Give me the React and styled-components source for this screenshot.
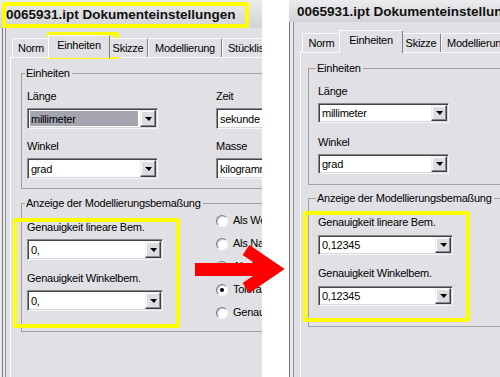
import React from "react";
import styled, { createGlobalStyle } from "styled-components";

const GlobalStyle = createGlobalStyle`
  html, body { margin: 0; padding: 0; background: #ffffff; }
  body { font-family: "Liberation Sans", Arial, sans-serif; }
  * { box-sizing: border-box; }
`;

const Page = styled.div`
  position: relative;
  width: 500px;
  height: 377px;
  overflow: hidden;
  display: flex;
  gap: 27px;
  background: #ffffff;
`;

const Dialog = styled.section`
  width: ${(p) => p.$w}px;
  flex: none;
  display: flex;
  flex-direction: column;
  overflow: hidden;
  background: #e1e1e5;
`;

const TitleBar = styled.header`
  height: ${(p) => p.$h}px;
  flex: none;
  display: flex;
  align-items: center;
  padding-left: ${(p) => p.$pl}px;
  background: linear-gradient(to bottom, #ececef, #d3d3d7);
  font-weight: 700;
  font-size: ${(p) => p.$fs}px;
  color: #111;
  white-space: nowrap;
`;

const frames = {
  left: "inset 2px 0 0 #e9e9ec, inset 3px 0 0 #7a7a7e, inset 5px 0 0 #e9e9ec, inset 6px 0 0 #8e8e92",
  right: "inset 1px 0 0 #7a7a7e, inset 4px 0 0 #e9e9ec, inset 5px 0 0 #8e8e92",
};

const Body = styled.div`
  flex: 1;
  min-height: 0;
  padding: ${(p) => p.$pt}px 0 0 ${(p) => p.$pl}px;
  box-shadow: ${(p) => frames[p.$frame]};
`;

const TabStrip = styled.div`
  position: relative;
  z-index: 2;
  display: flex;
  align-items: flex-end;
  height: 22px;
  padding-left: 2px;
  width: max-content;
`;

const Tab = styled.div`
  position: relative;
  z-index: ${(p) => (p.$active ? 2 : 1)};
  flex: none;
  width: ${(p) => p.$w}px;
  height: ${(p) => (p.$active ? 23 : 19)}px;
  margin: 0 ${(p) => (p.$active ? -2 : 0)}px ${(p) => (p.$active ? -1 : 0)}px;
  padding: 3px 0 0 ${(p) => p.$pl || 0}px;
  display: flex;
  justify-content: ${(p) => (p.$pl ? "flex-start" : "center")};
  background: #e1e1e5;
  border: 1px solid;
  border-bottom: none;
  border-color: #fdfdfd #7e7e82 transparent #fdfdfd;
  border-radius: 2px 2px 0 0;
  font-size: 11px;
  line-height: 13px;
  letter-spacing: -0.25px;
  color: #000;
  white-space: nowrap;
  overflow: hidden;
`;

const TabPanel = styled.div`
  width: 420px;
  height: 100%;
  border-top: 1px solid #fdfdfd;
  border-left: 1px solid #fdfdfd;
  padding: 9px 0 0 ${(p) => p.$pl}px;
`;

const Group = styled.fieldset`
  margin: 0 0 ${(p) => p.$mb || 0}px;
  padding: 0 0 ${(p) => p.$pb}px ${(p) => p.$pl}px;
  width: 330px;
  min-width: 0;
  border: 1px solid #a2a2a6;
`;

const Legend = styled.legend`
  padding: 0 2px 0 1px;
  margin-left: -2px;
  font-size: 11px;
  line-height: 13px;
  letter-spacing: -0.25px;
  color: #000;
  white-space: nowrap;
`;

const FieldGrid = styled.div`
  display: grid;
  grid-template-columns: ${(p) => p.$cols};
  row-gap: ${(p) => p.$rg || 0}px;
  padding-top: ${(p) => p.$pt}px;
  align-items: start;
`;

const FieldColumn = styled.div`
  display: flex;
  flex-direction: column;
  gap: ${(p) => p.$gap}px;
  margin-top: ${(p) => p.$mt || 0}px;
`;

const Field = styled.div`
  display: flex;
  flex-direction: column;
  gap: ${(p) => p.$gap}px;
`;

const Label = styled.span`
  font-size: 11px;
  line-height: 13px;
  letter-spacing: -0.25px;
  color: #000;
  white-space: nowrap;
`;

const ComboBox = styled.div`
  width: ${(p) => p.$w}px;
  height: ${(p) => p.$h}px;
  flex: none;
  display: flex;
  align-items: stretch;
  padding: 1px;
  background: #ffffff;
  border: 1px solid;
  border-color: #8a8a8e #f6f6f8 #f6f6f8 #8a8a8e;
  box-shadow: inset 1px 1px 0 #444448, inset -1px -1px 0 #d8d8dc;
`;

const ComboValue = styled.span`
  flex: 1;
  min-width: 0;
  display: flex;
  align-items: center;
  margin: 1px 2px 1px 1px;
  padding-left: 1px;
  background: ${(p) => (p.$hl ? "#a5a5b0" : "transparent")};
  font-size: 11px;
  letter-spacing: -0.25px;
  color: #000;
  white-space: nowrap;
  overflow: hidden;
`;

const ComboButton = styled.span`
  width: 16px;
  flex: none;
  display: flex;
  align-items: center;
  justify-content: center;
  background: #dddde1;
  border: 1px solid;
  border-color: #eeeeef #3e3e42 #3e3e42 #eeeeef;
  box-shadow: inset -1px -1px 0 #8a8a8e, inset 1px 1px 0 #ffffff;
`;

const DownTriangle = styled.span`
  width: 0;
  height: 0;
  border-left: 4px solid transparent;
  border-right: 3px solid transparent;
  border-top: 4px solid #000;
`;

const RadioList = styled.div`
  display: flex;
  flex-direction: column;
  gap: 10px;
`;

const RadioRow = styled.div`
  display: flex;
  align-items: center;
  gap: 5px;
  height: 13px;
`;

const RadioCircle = styled.span`
  width: 12px;
  height: 12px;
  flex: none;
  border-radius: 50%;
  background: #ffffff;
  border: 1px solid;
  border-color: #7c7c80 #f8f8f8 #f8f8f8 #7c7c80;
  box-shadow: inset 1px 1px 0 #c8c8cc;
  display: flex;
  align-items: center;
  justify-content: center;
  &::after {
    content: "";
    width: 4px;
    height: 4px;
    border-radius: 50%;
    background: #000;
    display: ${(p) => (p.$checked ? "block" : "none")};
  }
`;

const Highlight = styled.div`
  position: absolute;
  left: ${(p) => p.$x}px;
  top: ${(p) => p.$y}px;
  width: ${(p) => p.$w}px;
  height: ${(p) => p.$h}px;
  border: 4px solid #ffff00;
  border-radius: 2px;
  pointer-events: none;
`;

const ArrowSvg = styled.svg`
  position: absolute;
  left: 188px;
  top: 240px;
  pointer-events: none;
`;

function Combo({ w, h, value, hl }) {
  return (
    <ComboBox $w={w} $h={h}>
      <ComboValue $hl={hl}>{value}</ComboValue>
      <ComboButton>
        <DownTriangle />
      </ComboButton>
    </ComboBox>
  );
}

function LabeledCombo({ label, gap, ...combo }) {
  return (
    <Field $gap={gap}>
      <Label>{label}</Label>
      <Combo {...combo} />
    </Field>
  );
}

const leftTabs = [
  { label: "Norm", w: 38 },
  { label: "Einheiten", w: 62, active: true },
  { label: "Skizze", w: 40 },
  { label: "Modellierung", w: 74 },
  { label: "Stückliste", w: 70, pl: 5 },
];

const rightTabs = [
  { label: "Norm", w: 39 },
  { label: "Einheiten", w: 64, active: true },
  { label: "Skizze", w: 40 },
  { label: "Modellierung", w: 76, pl: 5 },
];

const radios = [
  { label: "Als Wert anzeigen" },
  { label: "Als Name anzeigen" },
  { label: "Als Ausdruck anzeigen" },
  { label: "Toleranz anzeigen", checked: true },
  { label: "Genauen Wert anzeigen" },
];

function Tabs({ items }) {
  return (
    <TabStrip>
      {items.map((t) => (
        <Tab key={t.label} $w={t.w} $pl={t.pl} $active={t.active}>
          {t.label}
        </Tab>
      ))}
    </TabStrip>
  );
}

export default function App() {
  return (
    <>
      <GlobalStyle />
      <Page>
        <Dialog $w={262}>
          <TitleBar $h={28} $fs={13.5} $pl={6}>
            0065931.ipt Dokumenteinstellungen
          </TitleBar>
          <Body $frame="left" $pt={7} $pl={10}>
            <Tabs items={leftTabs} />
            <TabPanel $pl={10}>
              <Group $pl={5} $pb={9} $mb={8}>
                <Legend>Einheiten</Legend>
                <FieldGrid $cols="189px 140px" $rg={11} $pt={10}>
                  <LabeledCombo label="Länge" gap={5} w={131} h={21} value="millimeter" hl />
                  <LabeledCombo label="Zeit" gap={5} w={131} h={21} value="sekunde" />
                  <LabeledCombo label="Winkel" gap={5} w={131} h={21} value="grad" />
                  <LabeledCombo label="Masse" gap={5} w={131} h={21} value="kilogramm" />
                </FieldGrid>
              </Group>
              <Group $pl={5} $pb={12}>
                <Legend>Anzeige der Modellierungsbemaßung</Legend>
                <FieldGrid $cols="189px 140px" $pt={4}>
                  <FieldColumn $gap={12} $mt={7}>
                    <LabeledCombo label="Genauigkeit lineare Bem." gap={5} w={136} h={21} value="0," />
                    <LabeledCombo label="Genauigkeit Winkelbem." gap={5} w={136} h={21} value="0," />
                  </FieldColumn>
                  <RadioList>
                    {radios.map((r) => (
                      <RadioRow key={r.label}>
                        <RadioCircle $checked={r.checked} />
                        <Label>{r.label}</Label>
                      </RadioRow>
                    ))}
                  </RadioList>
                </FieldGrid>
              </Group>
            </TabPanel>
          </Body>
        </Dialog>

        <Dialog $w={211}>
          <TitleBar $h={22} $fs={13.5} $pl={8}>
            0065931.ipt Dokumenteinstellungen
          </TitleBar>
          <Body $frame="right" $pt={8} $pl={11}>
            <Tabs items={rightTabs} />
            <TabPanel $pl={7}>
              <Group $pl={9} $pb={10} $mb={7}>
                <Legend>Einheiten</Legend>
                <FieldGrid $cols="200px" $rg={13} $pt={10}>
                  <LabeledCombo label="Länge" gap={5} w={131} h={20} value="millimeter" />
                  <LabeledCombo label="Winkel" gap={5} w={131} h={20} value="grad" />
                </FieldGrid>
              </Group>
              <Group $pl={9} $pb={20}>
                <Legend>Anzeige der Modellierungsbemaßung</Legend>
                <FieldGrid $cols="200px" $rg={12} $pt={11}>
                  <LabeledCombo label="Genauigkeit lineare Bem." gap={6} w={135} h={20} value="0,12345" />
                  <LabeledCombo label="Genauigkeit Winkelbem." gap={6} w={135} h={20} value="0,12345" />
                </FieldGrid>
              </Group>
            </TabPanel>
          </Body>
        </Dialog>

        <Highlight $x={2} $y={2} $w={247} $h={26} />
        <Highlight $x={47} $y={32} $w={72} $h={27} />
        <Highlight $x={13} $y={218} $w={167} $h={110} />
        <Highlight $x={303} $y={211} $w={167} $h={111} />

        <ArrowSvg width="104" height="60" viewBox="0 0 104 60">
          <rect x="7" y="23" width="72" height="13" fill="#ff0000" />
          <polyline
            points="58,10 86,29 58,48"
            fill="none"
            stroke="#ff0000"
            strokeWidth="12"
            strokeLinejoin="miter"
            strokeMiterlimit="4"
          />
        </ArrowSvg>
      </Page>
    </>
  );
}
